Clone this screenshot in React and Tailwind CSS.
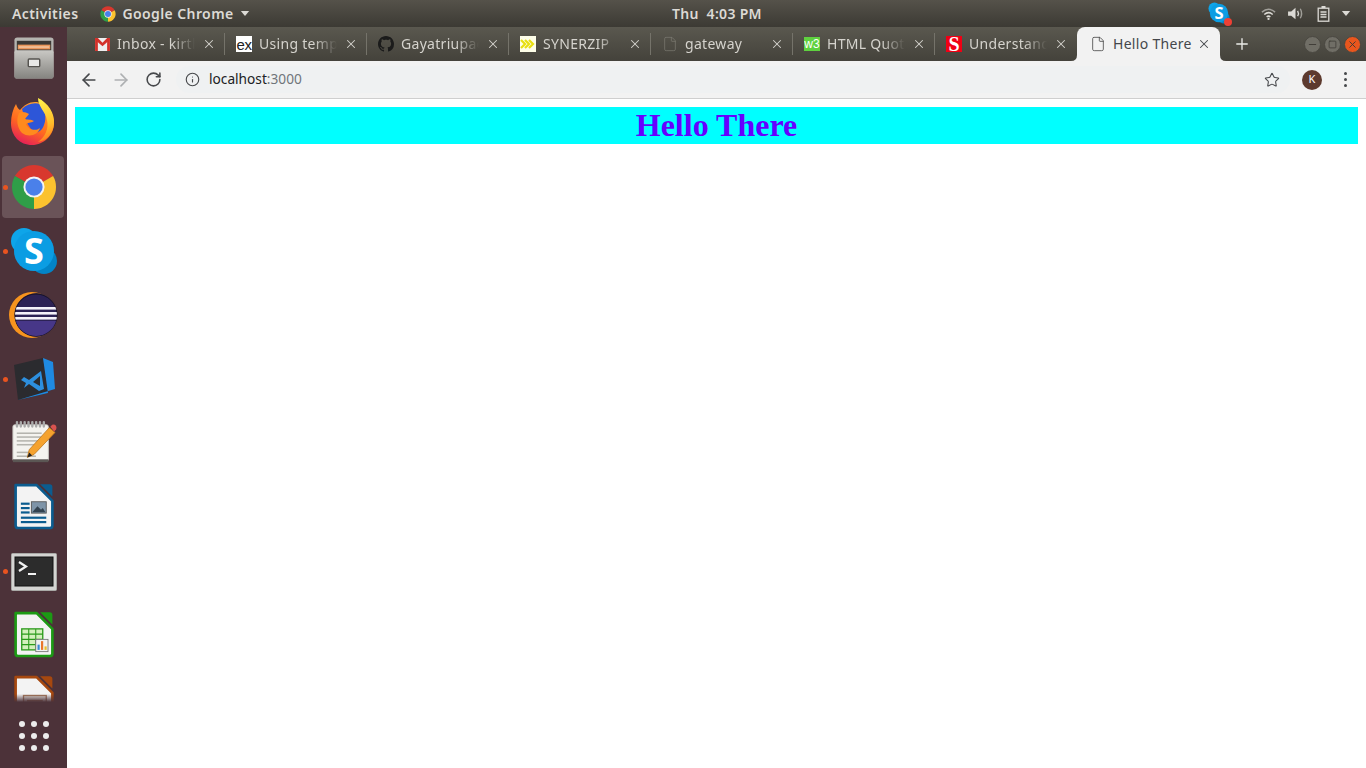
import React from 'react';
import { ArrowLeft, ArrowRight, RotateCw, Info, Star, X, Plus, File, Minus, Square } from 'lucide-react';

const ChromeLogo = ({ className }) => (
  <svg viewBox="0 0 48 48" className={className}>
    <path d="M24 24 L4.1 12.5 A23 23 0 0 1 43.9 12.5 Z" fill="#d8382e" />
    <path d="M24 24 L43.9 12.5 A23 23 0 0 1 24 47 Z" fill="#fbc22f" />
    <path d="M24 24 L24 47 A23 23 0 0 1 4.1 12.5 Z" fill="#2f9e48" />
    <circle cx="24" cy="24" r="11" fill="#f4f4f4" />
    <circle cx="24" cy="24" r="9" fill="#4a80ea" />
  </svg>
);

const FirefoxLogo = () => (
  <svg viewBox="0 0 58 58" className="w-[58px] h-[58px]">
    <defs>
      <linearGradient id="ffOuter" x1="0.7" y1="0" x2="0.2" y2="1">
        <stop offset="0" stopColor="#ffa92e" />
        <stop offset="0.55" stopColor="#ff6a1f" />
        <stop offset="1" stopColor="#e3165f" />
      </linearGradient>
      <linearGradient id="ffTail" x1="0.4" y1="0" x2="0.5" y2="1">
        <stop offset="0" stopColor="#fff04a" />
        <stop offset="0.6" stopColor="#ffbd2b" />
        <stop offset="1" stopColor="#ff7d1f" />
      </linearGradient>
    </defs>
    <path d="M11 10 C12 13 13 15 15 16 C19 11 24 8 30 8 C40 8 49 17 49 29 C49 41 39 51 27 51 C15 51 6 42 6 29 C6 22 8 15 11 10 Z" fill="url(#ffOuter)" />
    <path d="M17 15 C22 10 29 8 35 10 C40 15 42 24 39 31 C37 37 33 39 29 38 C24 34 20 26 17 15 Z" fill="#2d56d8" />
    <path d="M14 19 C17 17 21 18 24 20 C23 22 21 23 20 25 C22 26 26 25 29 27 C27 29 24 28 21 30 C23 35 30 38 35 34 C33 41 24 44 17 39 C12 34 11 25 14 19 Z" fill="#ff8a1e" />
    <path d="M33 4 C43 9 50 19 49 30 C48 40 41 47 33 48 C40 43 44 35 42 26 C41 18 33 13 33 4 Z" fill="url(#ffTail)" />
  </svg>
);

const SkypeLogo = ({ size }) => (
  <svg viewBox="0 0 48 48" style={{ width: size, height: size }}>
    <circle cx="14" cy="14" r="13" fill="#0ea5e9" />
    <circle cx="34" cy="34" r="13" fill="#0284c7" />
    <circle cx="24" cy="24" r="20" fill="#0b9de3" />
    <text x="24" y="37" textAnchor="middle" fontSize="36" fontWeight="700" fill="#fff" fontFamily="'Open Sans', sans-serif">S</text>
  </svg>
);

const EclipseLogo = () => (
  <svg viewBox="0 0 49 48" className="w-[49px] h-[48px]">
    <defs>
      <clipPath id="eclipseDisc"><circle cx="27" cy="24" r="21" /></clipPath>
    </defs>
    <circle cx="23" cy="24" r="23" fill="#f7941e" />
    <circle cx="27.5" cy="24" r="22" fill="#4c3239" />
    <circle cx="27" cy="24" r="21" fill="#2c2255" stroke="#15122c" strokeWidth="1" />
    <g clipPath="url(#eclipseDisc)">
      <path d="M6 30 H48 C46 39 37 45 27 45 C17 45 9 39 6 30 Z" fill="#473788" />
      <rect x="5" y="16" width="44" height="2.6" fill="#f4f2fa" />
      <rect x="5" y="21" width="44" height="2.6" fill="#f4f2fa" />
      <rect x="5" y="26" width="44" height="2.6" fill="#f4f2fa" />
    </g>
  </svg>
);

const VsCodeLogo = () => (
  <svg viewBox="0 0 42 44" className="w-[42px] h-[44px] translate-y-[1px]">
    <path d="M1 7 L30 0 L35 35 L5 42 Z" fill="#2b2b2f" />
    <path d="M30 0 L40 4 L42 31 L5 42 L35 35 Z" fill="#1f8ae2" />
    <path fillRule="evenodd" d="M8 22 L11 19 L16 22 L28 13 L31 31 L26 33 L16 26 L11 30 L13 25 Z M27 18 L20 24 L27 28 Z" fill="#2d8fde" />
  </svg>
);

const EditorLogo = () => (
  <svg viewBox="0 0 48 48" className="w-[46px] h-[46px]">
    <rect x="2" y="5" width="37" height="38" rx="2" fill="#f4f3ef" stroke="#c9c8c2" />
    <rect x="2" y="41" width="37" height="3" fill="#5b5754" />
    {[5, 9, 13, 17, 21, 25, 29, 33].map(x => (
      <rect key={x} x={x} y="1" width="2.5" height="7" rx="1.2" fill="#aaa" />
    ))}
    {[13, 17, 21, 25].map(y => (
      <rect key={y} x="6" y={y} width={y % 2 ? 26 : 20} height="1.6" fill="#b5b4ae" />
    ))}
    <rect x="6" y="33" width="14" height="1.6" fill="#b5b4ae" />
    <rect x="6" y="37" width="20" height="1.6" fill="#b5b4ae" />
    <path d="M40 8 L46 13 L24 36 L17 39 L19 31 Z" fill="#f5a22e" stroke="#b9731a" strokeWidth="0.8" />
    <path d="M41 7 L43 5 Q45 4 47 6 Q48 8 47 10 L45 12 Z" fill="#d9534f" />
    <path d="M19 34 L17 39 L22 37 Z" fill="#222" />
  </svg>
);

// LibreOffice style page, colour and inner drawing change per app
const OfficeDoc = ({ edge, children }) => (
  <svg viewBox="0 0 48 52" className="w-[42px] h-[48px]">
    <path d="M3 1 H27 L45 19 V47 Q45 50 42 50 H6 Q3 50 3 47 Z" fill="#f3f3f3" stroke={edge} strokeWidth="3" strokeLinejoin="round" />
    <path d="M31 0 H42 Q45 0 45 3 V14 Z" fill={edge} />
    {children}
  </svg>
);

const WriterLogo = () => (
  <OfficeDoc edge="#0b5c8f">
    <rect x="9" y="21" width="10" height="2.5" fill="#0b5c8f" />
    <rect x="9" y="26" width="10" height="2.5" fill="#0b5c8f" />
    <rect x="9" y="31" width="10" height="2.5" fill="#0b5c8f" />
    <rect x="21" y="20" width="17" height="13" fill="#7e94a8" stroke="#555" />
    <path d="M22 32 L28 25 L32 29 L34 27 L37 32 Z" fill="#33424f" />
    <rect x="9" y="37" width="29" height="2.5" fill="#0b5c8f" />
    <rect x="9" y="42" width="29" height="2.5" fill="#0b5c8f" />
  </OfficeDoc>
);

const CalcLogo = () => (
  <OfficeDoc edge="#1c9a14">
    <rect x="10" y="19" width="24" height="24" fill="#d4f0bd" stroke="#2a9a1a" strokeWidth="1.5" />
    <path d="M10 25 H34 M10 31 H34 M10 37 H34 M18 19 V43 M26 19 V43" stroke="#2a9a1a" strokeWidth="1.2" />
    <rect x="26" y="31" width="14" height="14" fill="#f2f2f2" stroke="#777" />
    <rect x="28" y="37" width="2.5" height="6" fill="#3b8bd0" />
    <rect x="32" y="33" width="2.5" height="10" fill="#e8762b" />
    <rect x="36" y="39" width="2.5" height="4" fill="#e8c12b" />
  </OfficeDoc>
);

const ImpressLogo = () => (
  <OfficeDoc edge="#a6480f">
    <rect x="12" y="22" width="26" height="18" fill="#e6e0da" stroke="#a6785c" strokeWidth="1.5" />
    <rect x="16" y="27" width="18" height="2" fill="#a6785c" />
    <rect x="16" y="32" width="18" height="2" fill="#a6785c" />
  </OfficeDoc>
);

const CabinetLogo = () => (
  <svg viewBox="0 0 42 44" className="w-[42px] h-[42px] -translate-y-[1px]">
    <defs>
      <linearGradient id="cabBody" x1="0" y1="0" x2="0" y2="1">
        <stop offset="0" stopColor="#c9c8c4" />
        <stop offset="1" stopColor="#858480" />
      </linearGradient>
    </defs>
    <rect x="0.5" y="0.5" width="41" height="43" rx="3" fill="#b5b4b0" />
    <rect x="3" y="4" width="36" height="12" fill="#3a3835" />
    <rect x="4" y="8" width="34" height="5" fill="#e9955a" />
    <rect x="5" y="10" width="32" height="1" fill="#f7e2c9" />
    <rect x="0.5" y="14" width="41" height="29.5" rx="2" fill="url(#cabBody)" />
    <rect x="15" y="23" width="12" height="8" rx="1" fill="#e8e8e6" stroke="#55534f" strokeWidth="1.5" />
  </svg>
);

const TerminalLogo = () => (
  <svg viewBox="0 0 46 38" className="w-[46px] h-[38px] translate-y-[1px]">
    <rect x="0.5" y="0.5" width="45" height="37" rx="1" fill="#d4d4d2" stroke="#a9a9a6" />
    <rect x="4" y="4" width="38" height="29" fill="#2c2c2c" stroke="#111" />
    <path d="M8 9 L15 13.5 L8 18" fill="none" stroke="#f2f2f2" strokeWidth="2.2" />
    <rect x="17" y="20" width="8" height="2" fill="#f2f2f2" />
  </svg>
);

const DockItem = ({ active, running, children }) => (
  <div className="relative h-16 shrink-0 flex items-center justify-center">
    {active && <div className="absolute left-[2px] right-[3px] top-[1px] bottom-[1px] rounded bg-[#6a5358]" />}
    {running && <div className="absolute left-[3px] top-[30px] w-[5px] h-[5px] rounded-full bg-[#e95420]" />}
    <div className="relative flex items-center justify-center">{children}</div>
  </div>
);

const Dock = () => (
  <div className="relative w-[67px] shrink-0 h-full bg-[#4c3239] flex flex-col overflow-hidden">
    <DockItem><CabinetLogo /></DockItem>
    <DockItem><FirefoxLogo /></DockItem>
    <DockItem active running><ChromeLogo className="w-[46px] h-[46px]" /></DockItem>
    <DockItem running><SkypeLogo size={48} /></DockItem>
    <DockItem><EclipseLogo /></DockItem>
    <DockItem running><VsCodeLogo /></DockItem>
    <DockItem><EditorLogo /></DockItem>
    <DockItem><WriterLogo /></DockItem>
    <DockItem running><TerminalLogo /></DockItem>
    <DockItem><CalcLogo /></DockItem>
    <DockItem><ImpressLogo /></DockItem>
    {/* fade + app grid sit over the clipped launcher icon */}
    <div className="absolute left-0 right-0 bottom-0 h-[66px] bg-[#4c3239]">
      <div className="absolute left-0 right-0 top-[-8px] h-[8px] bg-gradient-to-b from-transparent to-[#4c3239]" />
      <div className="grid grid-cols-3 gap-[6px] w-[30px] mx-auto mt-[19px]">
        {Array.from({ length: 9 }).map((_, i) => (
          <div key={i} className="w-[6px] h-[6px] rounded-full bg-[#ececec]" />
        ))}
      </div>
    </div>
  </div>
);

const TopBar = () => (
  <div className="h-[27px] shrink-0 flex items-center bg-gradient-to-b from-[#55524a] to-[#3c3a34] text-[#dcdad5] text-[14px] font-semibold">
    <div className="w-[672px] flex items-center shrink-0">
      <span className="ml-[12px] tracking-[0.4px]">Activities</span>
      <ChromeLogo className="ml-[22px] w-[16px] h-[16px]" />
      <span className="ml-[6px] tracking-[0.4px]">Google Chrome</span>
      <svg viewBox="0 0 10 6" className="ml-[6px] w-[10px] h-[5px]"><path d="M0 0 H10 L5 6 Z" fill="#dcdad5" /></svg>
    </div>
    <span className="tracking-[0.3px]">Thu&nbsp; 4:03 PM</span>
    <div className="ml-auto flex items-center">
      <div className="relative w-[24px] h-[24px] -translate-x-[1px]">
        <SkypeLogo size={22} />
        <div className="absolute right-0 bottom-0 w-[8px] h-[8px] rounded-full bg-[#ee4035]" />
      </div>
      <svg viewBox="0 0 16 14" className="ml-[28px] w-[15px] h-[14px]" fill="none" stroke="#dcdad5" strokeWidth="1.6">
        <path d="M1 5 Q8 -1 15 5" opacity="0.6" />
        <path d="M3.5 7.5 Q8 3.5 12.5 7.5" />
        <path d="M6 10 Q8 8.5 10 10" />
        <circle cx="8" cy="12.3" r="1.2" fill="#dcdad5" stroke="none" />
      </svg>
      <svg viewBox="0 0 16 14" className="ml-[11px] w-[17px] h-[15px]" fill="none" stroke="#dcdad5" strokeWidth="1.3">
        <path d="M1 5 H4 L8 1.5 V12.5 L4 9 H1 Z" fill="#dcdad5" stroke="none" />
        <path d="M10 4.5 Q11.5 7 10 9.5" />
        <path d="M12.5 2.5 Q15 7 12.5 11.5" opacity="0.6" />
      </svg>
      <svg viewBox="0 0 12 16" className="ml-[13px] w-[13px] h-[16px]" fill="none" stroke="#dcdad5" strokeWidth="1.3">
        <rect x="0.7" y="2.2" width="10.6" height="13" />
        <rect x="4" y="0" width="4" height="2" fill="#dcdad5" stroke="none" />
        <path d="M3 6 H9 M3 8.5 H9 M3 11 H9" />
      </svg>
      <svg viewBox="0 0 10 6" className="ml-[11px] mr-[15px] w-[10px] h-[5px]"><path d="M0 0 H10 L5 6 Z" fill="#dcdad5" /></svg>
    </div>
  </div>
);

const GmailIcon = () => (
  <svg viewBox="0 0 16 14" className="w-[15px] h-[13px]">
    <rect x="0" y="0" width="16" height="14" fill="#eeeeee" />
    <path d="M0 0 H3 V14 H0 Z M13 0 H16 V14 H13 Z" fill="#d3312a" />
    <path d="M0 0 L3 0 L8 5 L13 0 L16 0 L16 2 L8 9 L0 2 Z" fill="#d3312a" />
  </svg>
);

const ExIcon = () => (
  <div className="w-[16px] h-[16px] bg-white flex items-center justify-center overflow-hidden text-[15px] leading-none tracking-[-0.5px] text-[#222] font-['Liberation_Sans',sans-serif]">ex</div>
);

const GithubIcon = () => (
  <svg viewBox="0 0 16 16" className="w-[16px] h-[16px]" fill="#1b1b1b">
    <path d="M8 0C3.58 0 0 3.58 0 8c0 3.54 2.29 6.53 5.47 7.59.4.07.55-.17.55-.38 0-.19-.01-.82-.01-1.49-2.01.37-2.53-.49-2.69-.94-.09-.23-.48-.94-.82-1.13-.28-.15-.68-.52-.01-.53.63-.01 1.08.58 1.23.82.72 1.21 1.87.87 2.33.66.07-.52.28-.87.51-1.07-1.78-.2-3.64-.89-3.64-3.95 0-.87.31-1.59.82-2.15-.08-.2-.36-1.02.08-2.12 0 0 .67-.21 2.2.82.64-.18 1.32-.27 2-.27s1.36.09 2 .27c1.53-1.04 2.2-.82 2.2-.82.44 1.1.16 1.92.08 2.12.51.56.82 1.27.82 2.15 0 3.07-1.87 3.75-3.65 3.95.29.25.54.73.54 1.48 0 1.07-.01 1.93-.01 2.2 0 .21.15.46.55.38A8.01 8.01 0 0 0 16 8c0-4.42-3.58-8-8-8z" />
  </svg>
);

const SynerzipIcon = () => (
  <svg viewBox="0 0 16 16" className="w-[16px] h-[16px]">
    <rect width="16" height="16" fill="#fdfde8" />
    <path d="M1 4 L5 8 L1 12 M5 4 L9 8 L5 12 M9 4 L13 8 L9 12" fill="none" stroke="#e8df10" strokeWidth="2.2" />
  </svg>
);

const W3Icon = () => (
  <div className="w-[16px] h-[14px] bg-[#5fd13f] flex items-center justify-center overflow-hidden text-[12px] leading-none text-white font-['Liberation_Sans',sans-serif]">w3</div>
);

const SIcon = () => (
  <div className="w-[16px] h-[16px] bg-[#f00014] flex items-center justify-center overflow-hidden text-[20px] leading-none font-bold text-white font-['Liberation_Serif',serif]">S</div>
);

const tabs = [
  { title: 'Inbox - kirthi', icon: <GmailIcon />, first: true },
  { title: 'Using template', icon: <ExIcon /> },
  { title: 'Gayatriupadhyay', icon: <GithubIcon /> },
  { title: 'SYNERZIP', icon: <SynerzipIcon /> },
  { title: 'gateway', icon: <File size={16} strokeWidth={1} color="#807e76" /> },
  { title: 'HTML Quotation', icon: <W3Icon /> },
  { title: 'Understanding', icon: <SIcon /> },
];

const Tab = ({ title, icon, first }) => (
  <div className="w-[142px] shrink-0 flex items-center">
    <div className={`w-px h-[22px] ml-[2px] mr-[11px] ${first ? '' : 'bg-[#75736a]'}`} />
    <div className="w-[16px] h-[16px] flex items-center justify-center shrink-0">{icon}</div>
    <div className="ml-[7px] pb-[2px] w-[78px] overflow-hidden whitespace-nowrap text-[14px] tracking-[0.3px] text-[#d5d3cd] [mask-image:linear-gradient(to_right,black_70%,transparent)]">{title}</div>
    <X size={14} strokeWidth={1.8} color="#d5d3cd" className="ml-[7px] shrink-0" />
  </div>
);

const ActiveTab = () => (
  <div className="relative w-[146px] h-full shrink-0 flex items-center">
    <div className="absolute left-[3px] right-0 top-0 bottom-0 rounded-t-[8px] bg-[#f2f2f2]" />
    <svg viewBox="0 0 6 6" className="absolute left-[-3px] bottom-0 w-[6px] h-[6px]"><path d="M6 0 V6 H0 Q6 6 6 0 Z" fill="#f2f2f2" /></svg>
    <svg viewBox="0 0 6 6" className="absolute right-[-6px] bottom-0 w-[6px] h-[6px]"><path d="M0 0 V6 H6 Q0 6 0 0 Z" fill="#f2f2f2" /></svg>
    <div className="relative flex items-center pl-[16px]">
      <File size={16} strokeWidth={1.2} color="#444" className="shrink-0" />
      <span className="ml-[7px] pb-[2px] w-[84px] whitespace-nowrap text-[14px] tracking-[0.3px] text-[#44474b]">Hello There</span>
      <X size={14} strokeWidth={1.8} color="#45484c" className="shrink-0" />
    </div>
  </div>
);

const WindowButton = ({ color, children }) => (
  <div className={`w-[17px] h-[17px] rounded-full border border-[#4a4841] flex items-center justify-center ${color}`}>{children}</div>
);

const TabStrip = () => (
  <div className="h-[34px] shrink-0 flex items-stretch pl-[13px] bg-gradient-to-b from-[#5a584f] to-[#44423b]">
    {tabs.map(t => <Tab key={t.title} {...t} />)}
    <ActiveTab />
    <div className="ml-[13px] flex items-center">
      <Plus size={18} strokeWidth={1.8} color="#ebebe8" />
    </div>
    <div className="ml-auto mr-[5px] flex items-center gap-[3px]">
      <WindowButton color="bg-[#706e66]"><Minus size={11} color="#3c3a34" /></WindowButton>
      <WindowButton color="bg-[#706e66]"><Square size={9} color="#3c3a34" /></WindowButton>
      <WindowButton color="bg-[#e9561d]"><X size={11} color="#3c3a34" /></WindowButton>
    </div>
  </div>
);

const Toolbar = () => (
  <div className="h-[38px] shrink-0 flex items-center bg-[#f2f2f2] border-b border-[#cfcfcf]">
    <ArrowLeft size={20} strokeWidth={2} color="#46484b" className="ml-[12px]" />
    <ArrowRight size={20} strokeWidth={2} color="#aeb0b2" className="ml-[12px]" />
    <RotateCw size={17} strokeWidth={2.2} color="#46484b" className="ml-[14px]" />
    <div className="ml-[14px] w-[1114px] h-[27px] rounded-full bg-[#eff1f2] flex items-center">
      <Info size={15} strokeWidth={1.8} color="#46484b" className="ml-[9px]" />
      <span className="ml-[9px] text-[13.7px] text-[#202124]">localhost<span className="text-[#70757a]">:3000</span></span>
      <Star size={16} strokeWidth={1.6} color="#46484b" className="ml-auto mr-[10px]" />
    </div>
    <div className="ml-[12px] w-[20px] h-[20px] rounded-full bg-[#5d3a2e] flex items-center justify-center text-[11px] text-white">K</div>
    <div className="ml-[22px] flex flex-col gap-[3px]">
      <div className="w-[3px] h-[3px] rounded-full bg-[#46484b]" />
      <div className="w-[3px] h-[3px] rounded-full bg-[#46484b]" />
      <div className="w-[3px] h-[3px] rounded-full bg-[#46484b]" />
    </div>
  </div>
);

export default function App() {
  return (
    <div className="w-[1366px] h-[768px] flex flex-col overflow-hidden bg-white font-['Noto_Sans',sans-serif]">
      <TopBar />
      <div className="flex-1 flex min-h-0">
        <Dock />
        <div className="flex-1 flex flex-col min-w-0">
          <TabStrip />
          <Toolbar />
          <div className="flex-1 bg-white p-2">
            <h1 className="h-[37px] bg-[#00ffff] text-center text-[32px] leading-[37px] font-bold text-[#6600ff] font-['Liberation_Serif',serif]">Hello There</h1>
          </div>
        </div>
      </div>
    </div>
  );
}
